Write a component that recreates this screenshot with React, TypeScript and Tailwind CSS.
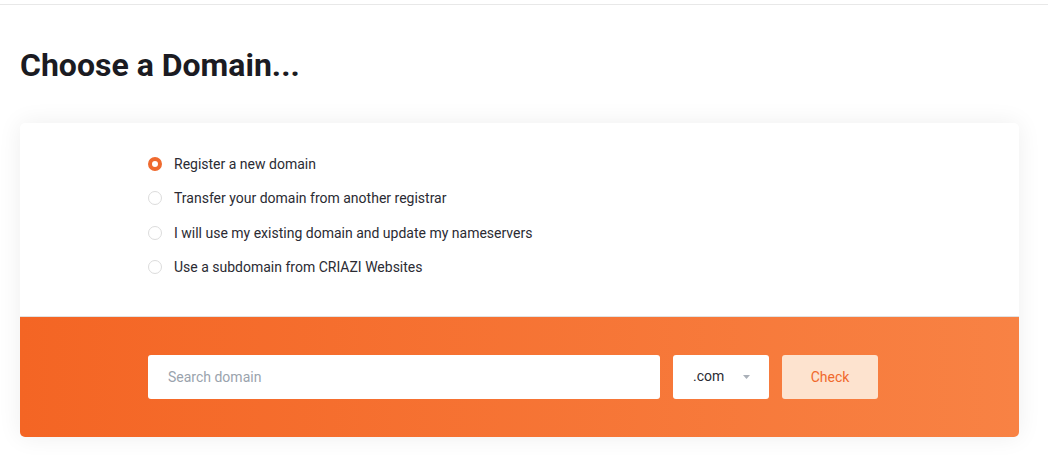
import { useState } from 'react'

const OPTIONS = [
  'Register a new domain',
  'Transfer your domain from another registrar',
  'I will use my existing domain and update my nameservers',
  'Use a subdomain from CRIAZI Websites',
]

export default function App() {
  const [selected, setSelected] = useState(0)

  return (
    <div className="min-h-[455px] bg-white font-['Roboto',sans-serif] text-[#333]">
      <div className="h-[5px] border-b border-[#e8e8e8]" />
      <div className="px-5">
        <h1 className="pt-[39px] text-[32px] font-bold leading-[42px] text-[#1b1b22]">
          Choose a Domain...
        </h1>

        <div className="mt-[37px] w-[999px] rounded-[5px] bg-white shadow-[0_0_24px_rgba(0,0,0,0.07)]">
          <div className="flex flex-col gap-[14.33px] border-b border-[#e2e2e2] px-[128px] pt-[31px] pb-[39px]">
            {OPTIONS.map((label, i) => (
              <label
                key={label}
                className="flex cursor-pointer items-center gap-3 text-[14px] leading-[20px] text-[#2b2b33]"
                onClick={() => setSelected(i)}
              >
                <span
                  className={`inline-block h-[14px] w-[14px] shrink-0 rounded-full ${
                    selected === i
                      ? 'border-[4px] border-[#ef6a2f] bg-white'
                      : 'border border-[#dcdcdc] bg-white'
                  }`}
                />
                {label}
              </label>
            ))}
          </div>

          <div className="flex items-center gap-[13px] rounded-b-[5px] bg-[linear-gradient(90deg,#f46524,#f88244)] px-[128px] py-[38px]">
            <input
              placeholder="Search domain"
              className="h-[44px] w-[512px] rounded-[3px] bg-white px-5 text-[14px] text-[#333] outline-none placeholder:text-[#9aa3ad]"
            />
            <div className="flex h-[44px] w-[96px] items-center justify-between rounded-[3px] bg-white pl-5 pr-[19px] text-[14px] text-[#2b2b33]">
              .com
              <svg width="7" height="4" viewBox="0 0 7 4">
                <path d="M0 0h7L3.5 4z" fill="#aab0b8" />
              </svg>
            </div>
            <button className="h-[44px] w-[96px] rounded-[3px] bg-[#fde3cf] pt-px text-[14px] text-[#f0692c]">
              Check
            </button>
          </div>
        </div>
      </div>
    </div>
  )
}
